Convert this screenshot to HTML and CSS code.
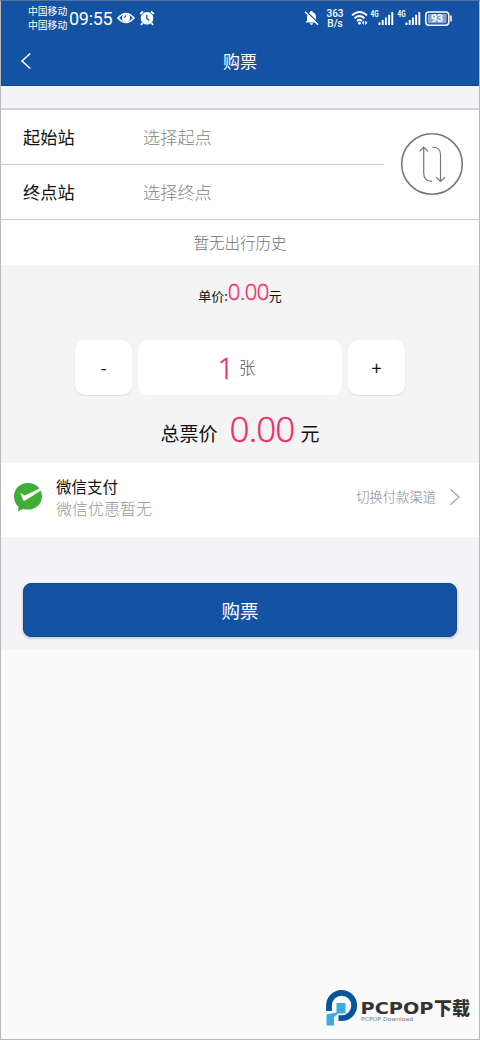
FILE: index.html
```html
<!DOCTYPE html>
<html lang="zh-CN">
<head>
<meta charset="utf-8">
<title>购票</title>
<link rel="stylesheet" href="styles.css">
</head>
<body>
<div class="screen">
  <header class="top">
    <div class="status">
      <div class="carriers"><span>中国移动</span><span>中国移动</span></div>
      <span class="clock">09:55</span>
      <svg class="eye" width="18" height="14" viewBox="0 0 18 14"><path d="M1 7Q9-2 17 7Q9 16 1 7Z" fill="none" stroke="#fff" stroke-width="1.6"/><circle cx="9" cy="7" r="4" fill="#fff"/><path d="M6.6 6.2Q8.5 7 8.8 4.4" fill="none" stroke="#1453a4" stroke-width="1"/></svg>
      <svg class="alarm" width="16" height="16" viewBox="0 0 16 16"><circle cx="8" cy="8.2" r="6.3" fill="#fff"/><path d="M1.2 4L4 1.4M12 1.4L14.8 4M3.5 13L2 15M12.5 13L14 15" stroke="#fff" stroke-width="1.8"/><path d="M7.8 4.8V8.5L10.3 10.5" fill="none" stroke="#1453a4" stroke-width="1.3"/></svg>
      <span class="spacer"></span>
      <svg class="bell" width="15" height="16" viewBox="0 0 15 16"><path d="M1.5 12.4L3 10.5V6.5Q3.1 3 6.3 2.2V1H8.5V2.2Q11.9 3 12 6.5V10.5L13.5 12.4ZM5.8 13.3H9.2Q8.8 15 7.5 15Q6.2 15 5.8 13.3Z" fill="#fff"/><path d="M2 1L14.8 13.8" stroke="#1453a4" stroke-width="1.4"/><path d="M1 1.7L14 14.7" stroke="#fff" stroke-width="1.4"/></svg>
      <div class="speed"><span>363</span><span>B/s</span></div>
      <svg class="wifi" width="18" height="16" viewBox="0 0 18 16"><path d="M1 5.4Q8.5-1.5 16 5.4M3.6 8.2Q8.5 3.8 13.4 8.2M6 11Q8.5 8.7 11 11" fill="none" stroke="#fff" stroke-width="1.9"/><circle cx="8.5" cy="13.2" r="1.4" fill="#fff"/><path d="M13 10.5L10.8 12.8L13 15ZM14.2 10.5L16.5 12.8L14.2 15Z" fill="#fff"/></svg>
      <svg class="signal" width="25" height="17" viewBox="0 0 25 17"><text x="-.5" y="7" textLength="8" lengthAdjust="spacingAndGlyphs" class="net">4G</text><path d="M8.5 12.5V15M11.7 10V15M14.9 7.5V15M18.1 4.8V15M21.3 2V15" stroke="#fff" stroke-width="1.9"/></svg>
      <svg class="signal second" width="25" height="17" viewBox="0 0 25 17"><text x="-.5" y="7" textLength="8" lengthAdjust="spacingAndGlyphs" class="net">4G</text><path d="M8.5 12.5V15M11.7 10V15M14.9 7.5V15M18.1 4.8V15M21.3 2V15" stroke="#fff" stroke-width="1.9"/></svg>
      <svg class="battery" width="28" height="16" viewBox="0 0 28 16"><rect x=".8" y="1" width="23" height="13.2" rx="3.2" fill="none" stroke="#fff" stroke-width="1.5"/><rect x="2.8" y="3" width="18.8" height="9.2" rx="1" fill="#81a4d0"/><path d="M26 4.6V10.6" stroke="#fff" stroke-width="1.5"/><text x="12" y="11.3" text-anchor="middle" class="level">93</text></svg>
    </div>
    <div class="nav">
      <svg class="back" width="12" height="18" viewBox="0 0 12 18"><path d="M10.2 1.5L2 9L10.2 16.5" fill="none" stroke="#fff" stroke-width="1.5"/></svg>
      <h1>购票</h1>
    </div>
  </header>

  <section class="route">
    <div class="stations">
      <div class="station"><label>起始站</label><span>选择起点</span></div>
      <div class="station"><label>终点站</label><span>选择终点</span></div>
    </div>
    <svg class="swap" width="64" height="64" viewBox="0 0 64 64" fill="none"><circle cx="32" cy="32" r="30.3" stroke="#777" stroke-width="1.6"/><path d="M19.5 19.3L23.7 15L28 19.3M23.7 15.5V41Q23.7 49 32 49.4M32.3 15Q40.5 15 40.5 23V49M36.2 45.3L40.5 49.4L44.8 45.3" stroke="#777" stroke-width="1.2"/></svg>
  </section>
  <div class="history">暂无出行历史</div>

  <section class="fare">
    <div class="unit"><span>单价:</span><b>0.00</b><span>元</span></div>
    <div class="stepper">
      <div class="step">-</div>
      <div class="count"><b>1</b><span>张</span></div>
      <div class="step">+</div>
    </div>
    <div class="total"><span>总票价</span><b>0.00</b><span>元</span></div>
  </section>

  <section class="pay">
    <svg class="wechat" width="30" height="30" viewBox="0 0 30 30"><path d="M15 1C23 1 29 6.7 29 14.3C29 22 23 27.6 15 27.6Q12.5 27.6 10 27L5 29.3L5.5 24.8Q1 21 1 14.3C1 6.7 7 1 15 1Z" fill="#3eae36"/><path d="M7.3 10.7L11.8 13.6L27.6 6L28.3 8.2L11.8 18.8Q10.7 19.4 10 18Z" fill="#fff"/></svg>
    <div class="method"><strong>微信支付</strong><span>微信优惠暂无</span></div>
    <span class="switch">切换付款渠道</span>
    <svg class="more" width="12" height="18" viewBox="0 0 12 18"><path d="M1.5 1.3L10 9L1.5 16.7" fill="none" stroke="#a5a5a5" stroke-width="1.2"/></svg>
  </section>

  <section class="action"><div class="buy">购票</div></section>

  <footer class="brand">
    <svg width="148" height="40" viewBox="0 0 148 40">
      <path d="M4 23V17.5A12.6 12.7 0 1 1 16.6 30.2H13.5" fill="none" stroke="#07549c" stroke-width="5.8"/>
      <path d="M11.5 15H20.5V25.5H13.5L9 29V37.5H1.5V26.5L11.5 24.5Z" fill="#3caae6"/>
      <text x="35.5" y="25.5" textLength="73" lengthAdjust="spacingAndGlyphs" class="word">PCPOP</text>
      <text x="109" y="26.5" textLength="36" lengthAdjust="spacingAndGlyphs" class="word-cn">下载</text>
      <text x="36" y="33" textLength="52" lengthAdjust="spacingAndGlyphs" class="sub">PCPOP Download</text>
    </svg>
  </footer>
</div>
</body>
</html>
```
FILE: styles.css
```css
* { box-sizing: border-box; }
body { margin: 0; font-family: "Noto Sans CJK SC", sans-serif; color: #111; }
.screen { width: 480px; height: 1040px; border: 1px solid #b9b9bb; border-top-color: #53739f; background: #fafafa; display: flex; flex-direction: column; overflow: hidden; }
.screen svg { flex: none; display: block; }
b, strong, h1 { font-weight: 400; margin: 0; }

.top { height: 85px; flex: none; background: #1453a4; color: #fff; border-bottom: 1px solid #0c459a; }
.status { height: 35px; padding-left: 27px; display: flex; align-items: center; }
.carriers { width: 41px; font-size: 9.8px; line-height: 14px; display: flex; flex-direction: column; padding-bottom: 1px; white-space: nowrap; }
.clock { width: 48px; font-family: Roboto, sans-serif; font-size: 18px; line-height: 34px; white-space: nowrap; letter-spacing: -.3px; }
.eye { margin-top: -2px; }
.alarm { margin: -2px 0 0 4px; }
.spacer { flex: 1; }
.bell { margin: -1px 7px 0 0; }
.speed { width: 18px; font-family: Roboto, sans-serif; font-weight: 500; font-size: 10px; line-height: 10px; text-align: center; display: flex; flex-direction: column; margin-right: 7px; }
.wifi { margin: -1px 2px 0 0; }
.signal { margin-top: -1px; overflow: visible; }
.second { margin-left: 2px; }
.battery { margin: 0 26px 0 2px; }
.net { font: 700 8.5px Roboto, sans-serif; fill: #fff; }
.level { font: 700 10.5px Roboto, sans-serif; fill: #fff; }
.nav { height: 49px; display: grid; grid-template-columns: 40px 1fr 40px; align-items: center; }
.back { margin-left: 19px; }
h1 { font-size: 17px; line-height: 24px; text-align: center; }

.route { height: 134px; flex: none; border-top: 22px solid #f3f3f8; border-bottom: 1px solid #ccc; background: #fff; display: flex; box-shadow: inset 0 2px #d3d3d7; }
.stations { width: 383px; }
.station { height: 54px; padding-left: 22px; display: flex; align-items: center; font-size: 17.2px; line-height: 24px; }
.station:first-child { height: 57px; padding-top: 2px; border-bottom: 1px solid #ccc; }
.station label { width: 120px; }
.station span { color: #858585; font-weight: 300; }
.swap { margin: 24px 0 0 16px; }
.history { height: 45px; flex: none; background: #fff; color: #707070; font-size: 15.5px; font-weight: 300; line-height: 44px; text-align: center; }

.fare { height: 198px; flex: none; background: #f4f4f4; }
.unit { height: 75px; padding-top: 11px; display: flex; justify-content: center; font-size: 13px; line-height: 40px; }
.fare b { color: #f52567; font-family: "Open Sans", sans-serif; font-weight: 300; -webkit-text-stroke: .4px #f52567; }
.unit b { font-size: 22px; line-height: 30px; letter-spacing: -.5px; }
.stepper { display: flex; justify-content: center; gap: 6px; height: 55px; }
.step, .count { background: #fff; border-radius: 10px; }
.step { width: 57px; font-size: 18px; line-height: 54px; text-align: center; box-shadow: 0 1px 1px #ddd; }
.count { width: 204px; display: flex; align-items: center; justify-content: center; gap: 5px; padding-right: 7px; }
.count b { font-size: 29px; line-height: 54px; }
.count span { color: #555; font-size: 16.5px; font-weight: 300; padding-bottom: 2px; }
.total { display: flex; justify-content: center; font-size: 19px; line-height: 75px; }
.total b { font-size: 35px; line-height: 67px; margin: 0 6px 0 12px; letter-spacing: -.8px; }

.pay { height: 74px; flex: none; background: #fff; display: flex; align-items: center; padding: 0 18px 0 12px; }
.method { flex: 1; margin-left: 13px; display: flex; flex-direction: column; line-height: 22px; padding-bottom: 7px; }
.method strong { font-size: 15.5px; }
.method span { font-size: 16px; font-weight: 300; color: #999; }
.wechat { margin-top: -6px; }
.switch { font-size: 13.3px; font-weight: 300; color: #888; margin-right: 13px; padding-bottom: 7px; }
.more { margin-bottom: 6px; }

.action { height: 112px; flex: none; background: #f3f3f8; padding: 46px 22px 0; }
.buy { height: 54px; border-radius: 8px; border: 1px solid #0c4b9e; background: #1453a4; color: #fff; font-size: 18.5px; line-height: 52px; text-align: center; box-shadow: 0 1px 3px #bbb; }
.brand { margin: auto 6px 11px auto; }
.word { font: 700 16px "DejaVu Sans", sans-serif; fill: #333; }
.word-cn { font: 900 18px "Noto Sans CJK SC", sans-serif; fill: #333; }
.sub { font: 5.5px "DejaVu Sans", sans-serif; fill: #777; }
```
